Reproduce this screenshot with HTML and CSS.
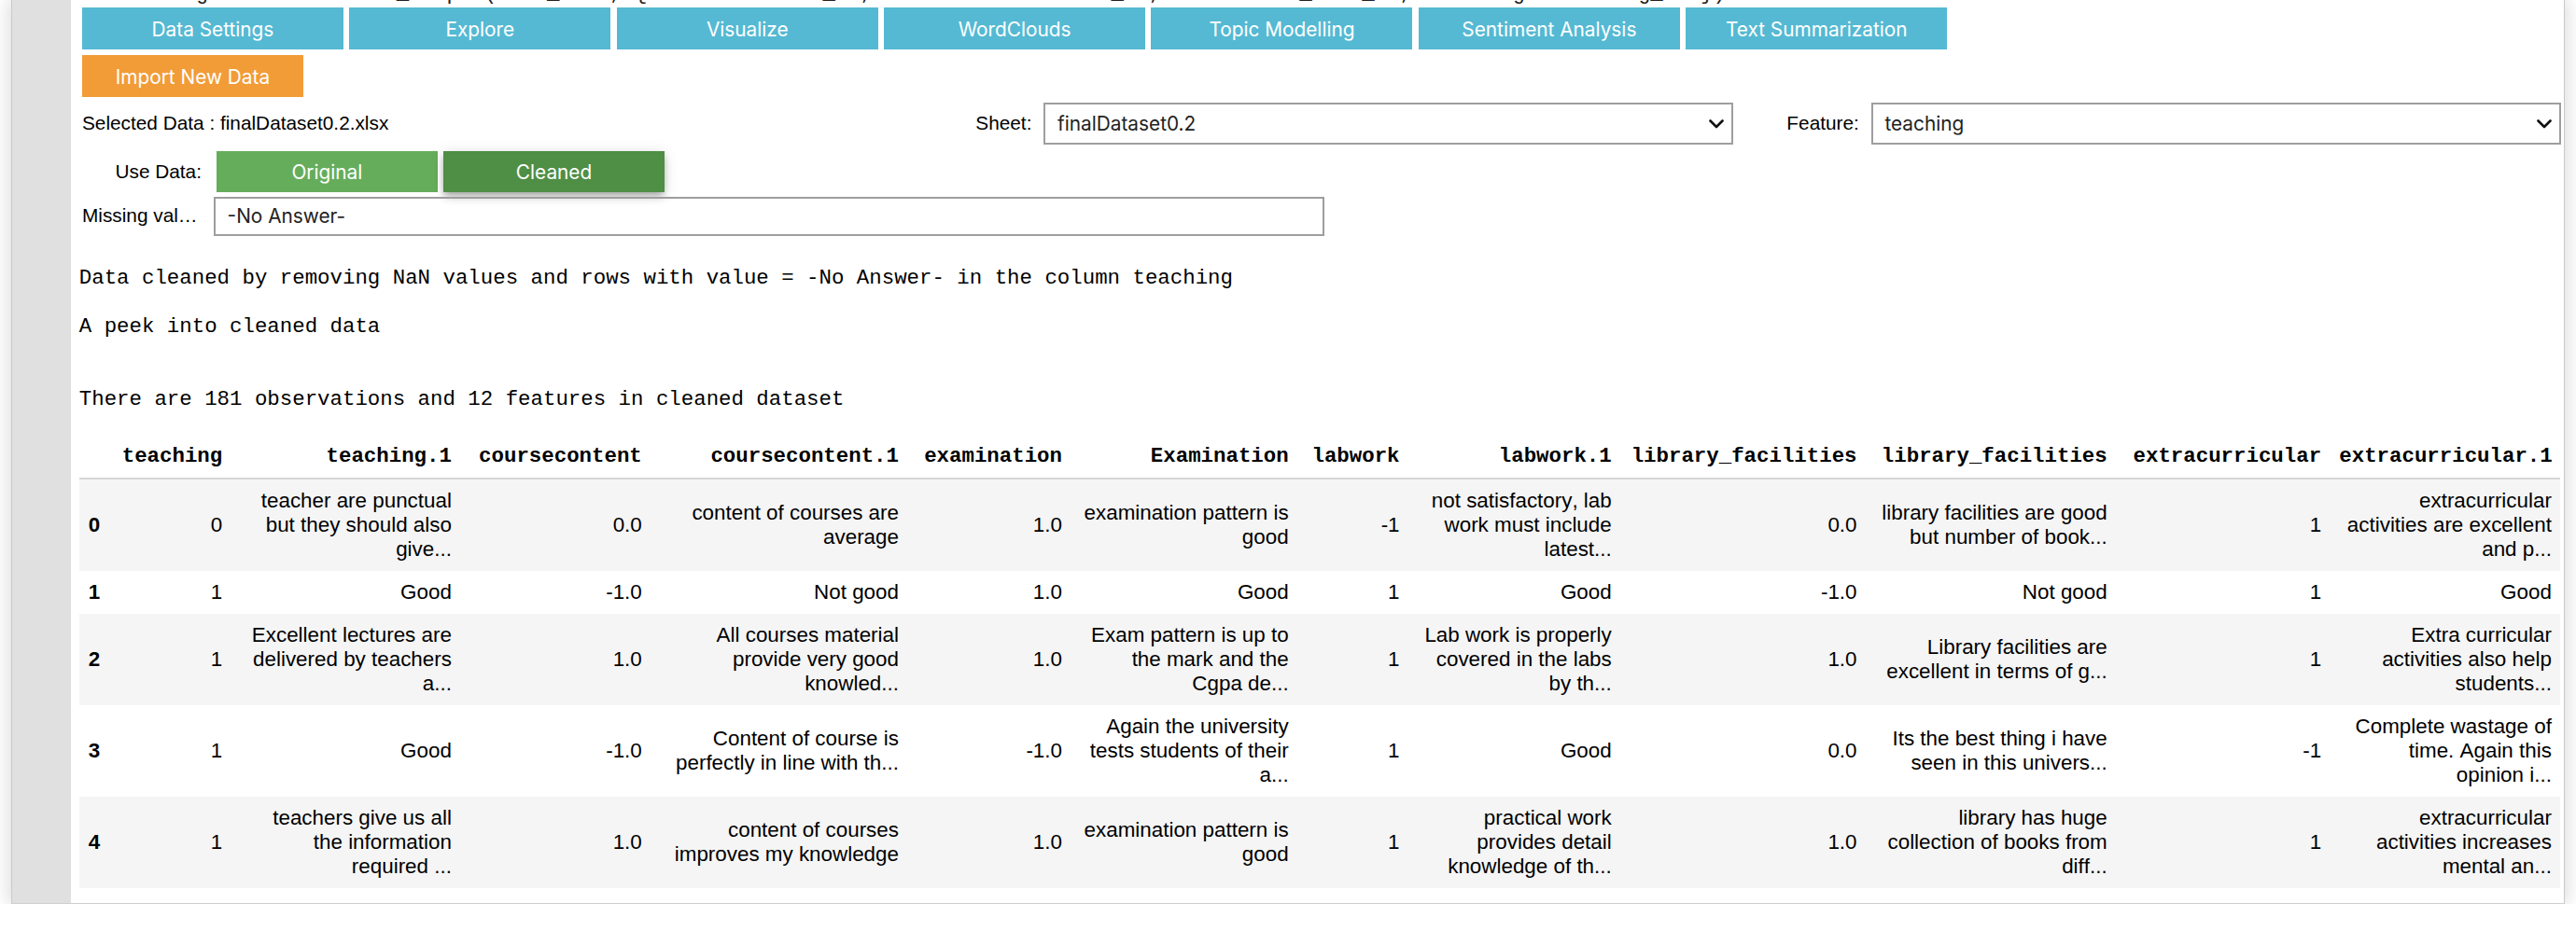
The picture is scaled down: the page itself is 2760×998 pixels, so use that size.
FILE: index.html
```html
<!DOCTYPE html>
<html lang="en">
<head>
<meta charset="utf-8">
<title>Data Settings</title>
<link rel="stylesheet" href="styles.css">
</head>
<body>
<div class="cell">
  <div class="gutter"></div>
  <div class="main">
    <div class="code-peek"><pre>out = widgets.interactive_output(show_data, {'sheet': sheet_dd, 'feature': feature_dd, 'use': use_data_tb, 'missing': missing_txt})</pre></div>
    <div class="output">
      <div class="widgets">
        <div class="hbox">
          <button class="btn info tab">Data Settings</button>
          <button class="btn info tab">Explore</button>
          <button class="btn info tab">Visualize</button>
          <button class="btn info tab">WordClouds</button>
          <button class="btn info tab">Topic Modelling</button>
          <button class="btn info tab">Sentiment Analysis</button>
          <button class="btn info tab">Text Summarization</button>
        </div>
        <div class="hbox">
          <button class="btn warn">Import New Data</button>
        </div>
        <div class="hbox data-row">
          <div class="plain-label">Selected Data : finalDataset0.2.xlsx</div>
          <div class="dd">
            <span class="desc">Sheet:</span>
            <div class="select"><span>finalDataset0.2</span><svg class="chev" width="16" height="10" viewBox="0 0 16 10"><path d="M1.5 1.5 L8 8 L14.5 1.5" fill="none" stroke="#111" stroke-width="2.6" stroke-linecap="round" stroke-linejoin="round"/></svg></div>
          </div>
          <div class="dd">
            <span class="desc">Feature:</span>
            <div class="select"><span>teaching</span><svg class="chev" width="16" height="10" viewBox="0 0 16 10"><path d="M1.5 1.5 L8 8 L14.5 1.5" fill="none" stroke="#111" stroke-width="2.6" stroke-linecap="round" stroke-linejoin="round"/></svg></div>
          </div>
        </div>
        <div class="hbox toggle-row">
          <span class="desc">Use Data:</span>
          <button class="btn success">Original</button>
          <button class="btn success active">Cleaned</button>
        </div>
        <div class="hbox text-row">
          <span class="desc ell">Missing values :</span>
          <div class="input">-No Answer-</div>
        </div>
      </div>
<pre class="stream">Data cleaned by removing NaN values and rows with value = -No Answer- in the column teaching

A peek into cleaned data


There are 181 observations and 12 features in cleaned dataset</pre>
      <table class="df">
        <thead>
          <tr>
            <th class="c-idx"></th>
            <th class="c-teach">teaching</th>
            <th class="c-teach1">teaching.1</th>
            <th class="c-cc">coursecontent</th>
            <th class="c-cc1">coursecontent.1</th>
            <th class="c-ex">examination</th>
            <th class="c-ex1">Examination</th>
            <th class="c-lab">labwork</th>
            <th class="c-lab1">labwork.1</th>
            <th class="c-lib">library_facilities</th>
            <th class="c-lib1">library_facilities</th>
            <th class="c-xc">extracurricular</th>
            <th class="c-xc1">extracurricular.1</th>
          </tr>
        </thead>
        <tbody>
          <tr>
            <th>0</th>
            <td>0</td>
            <td>teacher are punctual but they should also give...</td>
            <td>0.0</td>
            <td>content of courses are average</td>
            <td>1.0</td>
            <td>examination pattern is good</td>
            <td>-1</td>
            <td>not satisfactory, lab work must include latest...</td>
            <td>0.0</td>
            <td>library facilities are good but number of book...</td>
            <td>1</td>
            <td>extracurricular activities are excellent and p...</td>
          </tr>
          <tr>
            <th>1</th>
            <td>1</td>
            <td>Good</td>
            <td>-1.0</td>
            <td>Not good</td>
            <td>1.0</td>
            <td>Good</td>
            <td>1</td>
            <td>Good</td>
            <td>-1.0</td>
            <td>Not good</td>
            <td>1</td>
            <td>Good</td>
          </tr>
          <tr>
            <th>2</th>
            <td>1</td>
            <td>Excellent lectures are delivered by teachers a...</td>
            <td>1.0</td>
            <td>All courses material provide very good knowled...</td>
            <td>1.0</td>
            <td>Exam pattern is up to the mark and the Cgpa de...</td>
            <td>1</td>
            <td>Lab work is properly covered in the labs by th...</td>
            <td>1.0</td>
            <td>Library facilities are excellent in terms of g...</td>
            <td>1</td>
            <td>Extra curricular activities also help students...</td>
          </tr>
          <tr>
            <th>3</th>
            <td>1</td>
            <td>Good</td>
            <td>-1.0</td>
            <td>Content of course is perfectly in line with th...</td>
            <td>-1.0</td>
            <td>Again the university tests students of their a...</td>
            <td>1</td>
            <td>Good</td>
            <td>0.0</td>
            <td>Its the best thing i have seen in this univers...</td>
            <td>-1</td>
            <td>Complete wastage of time. Again this opinion i...</td>
          </tr>
          <tr>
            <th>4</th>
            <td>1</td>
            <td>teachers give us all the information required ...</td>
            <td>1.0</td>
            <td>content of courses improves my knowledge</td>
            <td>1.0</td>
            <td>examination pattern is good</td>
            <td>1</td>
            <td>practical work provides detail knowledge of th...</td>
            <td>1.0</td>
            <td>library has huge collection of books from diff...</td>
            <td>1</td>
            <td>extracurricular activities increases mental an...</td>
          </tr>
        </tbody>
      </table>
    </div>
  </div>
</div>
</body>
</html>
```

FILE: styles.css
```css
* { box-sizing: border-box; }

html, body {
  margin: 0;
  padding: 0;
  background: #ffffff;
}

body {
  font-family: "Inter", "Liberation Sans", sans-serif;
  color: #000;
}

.cell {
  display: flex;
  margin-left: 12px;
  width: 2736px;
  background: #ffffff;
  border-left: 1px solid #c9c9c9;
  border-right: 1px solid #c9c9c9;
  border-bottom: 1px solid #cfcfcf;
  box-shadow: 0 0 19px 2px rgba(87, 87, 87, 0.22);
}

.gutter {
  flex: none;
  width: 63px;
  background: #e0e0e0;
}

.main {
  flex: 1;
  min-width: 0;
  padding: 0 0 16px 8.8px;
}

.code-peek {
  height: 4.8px;
  overflow: hidden;
}

.code-peek pre {
  margin: -20px 0 0 4px;
  font-family: "Liberation Mono", monospace;
  font-size: 22.4px;
  line-height: 26px;
  color: #222;
  white-space: pre;
}

.widgets {
  display: flex;
  flex-direction: column;
}

.hbox {
  display: flex;
  align-items: center;
}

.btn {
  flex: none;
  height: 44.8px;
  width: 236.8px;
  margin: 3.2px;
  padding: 1.5px 12.8px 0;
  border: 0;
  font-family: "Inter", "Liberation Sans", sans-serif;
  font-size: 20.8px;
  line-height: 43px;
  color: #ffffff;
  text-align: center;
  white-space: nowrap;
  cursor: pointer;
}

.btn.tab { width: 280px; }

.btn.info { background: #55b9d3; }
.btn.warn { background: #f29c38; }
.btn.success { background: #66ad5b; }
.btn.success.active {
  background: #4f8e45;
  box-shadow: 0 6.4px 8px 0 rgba(0, 0, 0, 0.14),
              0 1.6px 16px 0 rgba(0, 0, 0, 0.12),
              0 3.2px 6.4px -1.6px rgba(0, 0, 0, 0.2);
}

.data-row {
  height: 51.2px;
}

.plain-label {
  margin: 3.2px auto 3.2px 3.2px;
  font-family: "Liberation Sans", Arial, sans-serif;
  font-size: 20.8px;
  line-height: 44.8px;
  white-space: nowrap;
}

.dd {
  flex: none;
  display: flex;
  align-items: center;
  width: 880px;
  height: 44.8px;
  margin: 3.2px;
}

.desc {
  flex: none;
  width: 128px;
  margin-right: 12.8px;
  font-family: "Liberation Sans", Arial, sans-serif;
  font-size: 20.8px;
  line-height: 44.8px;
  text-align: right;
  white-space: nowrap;
}

.desc.ell {
  overflow: hidden;
  text-overflow: ellipsis;
}

.select {
  flex: 1;
  display: flex;
  align-items: center;
  justify-content: space-between;
  height: 44.8px;
  padding: 0 8px 0 12.8px;
  border: 2px solid #9e9e9e;
  background: #ffffff;
  font-size: 20.8px;
  color: #222;
}

.chev { flex: none; }

.toggle-row .desc { margin-left: 3.2px; }

.text-row {
  margin-top: -2px;
}

.text-row .desc { margin-left: 3.2px; }

.input {
  flex: none;
  width: 1190px;
  height: 42px;
  margin: 3.2px;
  margin-left: 0;
  padding: 0 12.8px;
  border: 2px solid #9e9e9e;
  font-size: 20.8px;
  line-height: 38px;
  color: #222;
}

.stream {
  margin: 29px 0 0 0;
  font-family: "Liberation Mono", monospace;
  font-size: 22.4px;
  line-height: 26px;
  color: #000;
  white-space: pre;
}

.df {
  margin-top: 25px;
  width: 2658.7px;
  table-layout: fixed;
  border-collapse: collapse;
  border-spacing: 0;
  font-family: "Liberation Sans", Arial, sans-serif;
  font-size: 22.4px;
  font-kerning: none;
  color: #000;
}

.df th,
.df td {
  padding: 10px 9.6px;
  line-height: 26px;
  text-align: right;
  vertical-align: middle;
  border: none;
}

.df thead th {
  font-family: "Liberation Mono", monospace;
  font-weight: bold;
  vertical-align: bottom;
  white-space: nowrap;
  border-bottom: 2px solid #d6d6d6;
}

.df tbody th {
  font-weight: bold;
}

.df tbody tr:nth-child(odd) { background: #f5f5f5; }
.df tbody tr:nth-child(even) { background: #ffffff; }

.c-idx { width: 32px; }
.c-teach { width: 131px; }
.c-teach1 { width: 245.7px; }
.c-cc { width: 203.9px; }
.c-cc1 { width: 275.2px; }
.c-ex { width: 175px; }
.c-ex1 { width: 242.7px; }
.c-lab { width: 118.9px; }
.c-lab1 { width: 227.2px; }
.c-lib { width: 262.8px; }
.c-lib1 { width: 268.2px; }
.c-xc { width: 229.4px; }
.c-xc1 { width: 246.7px; }
```
